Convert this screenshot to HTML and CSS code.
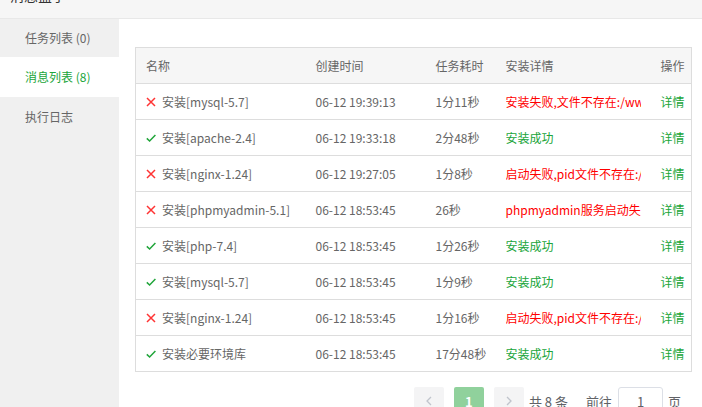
FILE: index.html
```html
<!DOCTYPE html>
<html lang="zh-CN">
<head>
  <meta charset="UTF-8">
  <title>消息盒子</title>
  <link rel="stylesheet" href="styles.css">
</head>
<body>
  <div class="box-header">
    <div class="box-title">消息盒子</div>
  </div>

  <div class="box-body">
    <div class="side-menu">
      <div class="menu-item first">任务列表 (0)</div>
      <div class="menu-item active">消息列表 (8)</div>
      <div class="menu-item">执行日志</div>
    </div>

    <div class="main">
      <table class="msg-table">
        <colgroup>
          <col class="c-name">
          <col class="c-time">
          <col class="c-cost">
          <col class="c-detail">
          <col class="c-op">
        </colgroup>
        <thead>
          <tr>
            <th>名称</th>
            <th>创建时间</th>
            <th>任务耗时</th>
            <th>安装详情</th>
            <th>操作</th>
          </tr>
        </thead>
        <tbody>
          <tr>
            <td><span class="name"><svg class="ico fail" viewBox="0 0 10 10"><path d="M1 1L9 9M9 1L1 9"/></svg>安装[mysql-5.7]</span></td>
            <td>06-12 19:39:13</td>
            <td>1分11秒</td>
            <td><div class="cut txt-fail">安装失败,文件不存在:/www/server/mysql/bin/mysqld</div></td>
            <td class="op">详情</td>
          </tr>
          <tr>
            <td><span class="name"><svg class="ico ok" viewBox="0 0 10 10"><path d="M0.8 5.4L3.6 8L9.4 2"/></svg>安装[apache-2.4]</span></td>
            <td>06-12 19:33:18</td>
            <td>2分48秒</td>
            <td><div class="cut txt-ok">安装成功</div></td>
            <td class="op">详情</td>
          </tr>
          <tr>
            <td><span class="name"><svg class="ico fail" viewBox="0 0 10 10"><path d="M1 1L9 9M9 1L1 9"/></svg>安装[nginx-1.24]</span></td>
            <td>06-12 19:27:05</td>
            <td>1分8秒</td>
            <td><div class="cut txt-fail">启动失败,pid文件不存在:/www/server/nginx/logs/nginx.pid</div></td>
            <td class="op">详情</td>
          </tr>
          <tr>
            <td><span class="name"><svg class="ico fail" viewBox="0 0 10 10"><path d="M1 1L9 9M9 1L1 9"/></svg>安装[phpmyadmin-5.1]</span></td>
            <td>06-12 18:53:45</td>
            <td>26秒</td>
            <td><div class="cut txt-fail">phpmyadmin服务启动失败</div></td>
            <td class="op">详情</td>
          </tr>
          <tr>
            <td><span class="name"><svg class="ico ok" viewBox="0 0 10 10"><path d="M0.8 5.4L3.6 8L9.4 2"/></svg>安装[php-7.4]</span></td>
            <td>06-12 18:53:45</td>
            <td>1分26秒</td>
            <td><div class="cut txt-ok">安装成功</div></td>
            <td class="op">详情</td>
          </tr>
          <tr>
            <td><span class="name"><svg class="ico ok" viewBox="0 0 10 10"><path d="M0.8 5.4L3.6 8L9.4 2"/></svg>安装[mysql-5.7]</span></td>
            <td>06-12 18:53:45</td>
            <td>1分9秒</td>
            <td><div class="cut txt-ok">安装成功</div></td>
            <td class="op">详情</td>
          </tr>
          <tr>
            <td><span class="name"><svg class="ico fail" viewBox="0 0 10 10"><path d="M1 1L9 9M9 1L1 9"/></svg>安装[nginx-1.24]</span></td>
            <td>06-12 18:53:45</td>
            <td>1分16秒</td>
            <td><div class="cut txt-fail">启动失败,pid文件不存在:/www/server/nginx/logs/nginx.pid</div></td>
            <td class="op">详情</td>
          </tr>
          <tr>
            <td><span class="name"><svg class="ico ok" viewBox="0 0 10 10"><path d="M0.8 5.4L3.6 8L9.4 2"/></svg>安装必要环境库</span></td>
            <td>06-12 18:53:45</td>
            <td>17分48秒</td>
            <td><div class="cut txt-ok">安装成功</div></td>
            <td class="op">详情</td>
          </tr>
        </tbody>
      </table>

      <div class="pagination">
        <button class="pg-btn disabled"><svg viewBox="0 0 8 12"><path d="M6 2L2 6L6 10"/></svg></button>
        <button class="pg-btn current">1</button>
        <button class="pg-btn disabled"><svg viewBox="0 0 8 12"><path d="M2 2L6 6L2 10"/></svg></button>
        <span class="pg-total">共 8 条</span>
        <span class="pg-jump">前往<input class="pg-input" type="text" value="1">页</span>
      </div>
    </div>
  </div>
</body>
</html>
```

FILE: styles.css
```css
* {
  box-sizing: border-box;
}

html, body {
  height: 100%;
}

body {
  margin: 0;
  font-family: "Noto Sans CJK SC", sans-serif;
  font-size: 12px;
  color: #666;
  background: #fff;
  overflow: hidden;
  display: flex;
  flex-direction: column;
}

.box-header {
  height: 19px;
  flex: none;
  background: #f6f6f6;
  border-bottom: 1px solid #e8e8e8;
  padding-left: 10px;
  overflow: hidden;
}

.box-title {
  font-size: 14px;
  line-height: 14px;
  margin-top: -12px;
  color: #333;
}

.box-body {
  flex: 1;
  display: flex;
  min-height: 0;
}

.side-menu {
  width: 119px;
  flex: none;
  background: #f0f0f0;
}

.menu-item {
  height: 40px;
  line-height: 40px;
  padding-left: 25px;
  color: #666;
  font-size: 12px;
}

.menu-item.first {
  height: 38px;
  line-height: 38px;
}

.menu-item.active {
  background: #fff;
  color: #20a53a;
}

.main {
  flex: 1;
  padding: 28px 10px 0 16px;
  min-width: 0;
}

.msg-table {
  width: 100%;
  table-layout: fixed;
  border-collapse: collapse;
  border: 1px solid #ddd;
}

.c-name { width: 170px; }
.c-time { width: 120px; }
.c-cost { width: 70px; }
.c-detail { width: 155px; }

.msg-table th,
.msg-table td {
  height: 36px;
  padding: 0 10px;
  text-align: left;
  font-weight: normal;
  white-space: nowrap;
  overflow: hidden;
  border-bottom: 1px solid #ddd;
}

.msg-table th {
  background: #f6f6f6;
  color: #666;
}

.msg-table td.op {
  padding-right: 0;
  color: #20a53a;
}

.cut {
  overflow: hidden;
  white-space: nowrap;
}

.name {
  display: flex;
  align-items: center;
  gap: 6px;
}

.ico {
  width: 10px;
  height: 10px;
  flex: none;
  fill: none;
  stroke-width: 1.5;
}

.ico.fail {
  stroke: #f33;
}

.ico.ok {
  stroke: #20a53a;
}

.txt-fail {
  color: #f00;
}

.txt-ok {
  color: #20a53a;
}

.pagination {
  display: flex;
  align-items: center;
  justify-content: flex-end;
  margin-top: 15px;
  padding-right: 11px;
  font-size: 13px;
  color: #606266;
}

.pg-btn {
  width: 30px;
  height: 28px;
  margin: 0 5px;
  border: none;
  border-radius: 2px;
  background: #f4f4f5;
  font-family: inherit;
  font-size: 13px;
  font-weight: bold;
  padding: 0;
  display: flex;
  align-items: center;
  justify-content: center;
}

.pg-btn svg {
  width: 8px;
  height: 12px;
  fill: none;
  stroke: #c0c4cc;
  stroke-width: 1.3;
}

.pg-btn.current {
  background: #90d19c;
  color: #fff;
}

.pg-total {
  margin-right: 18px;
}

.pg-jump {
  display: flex;
  align-items: center;
}

.pg-input {
  width: 45px;
  height: 28px;
  margin: 0 5px 0 6px;
  border: 1px solid #dcdfe6;
  border-radius: 3px;
  text-align: center;
  font-family: inherit;
  font-size: 13px;
  color: #606266;
  outline: none;
}
```
